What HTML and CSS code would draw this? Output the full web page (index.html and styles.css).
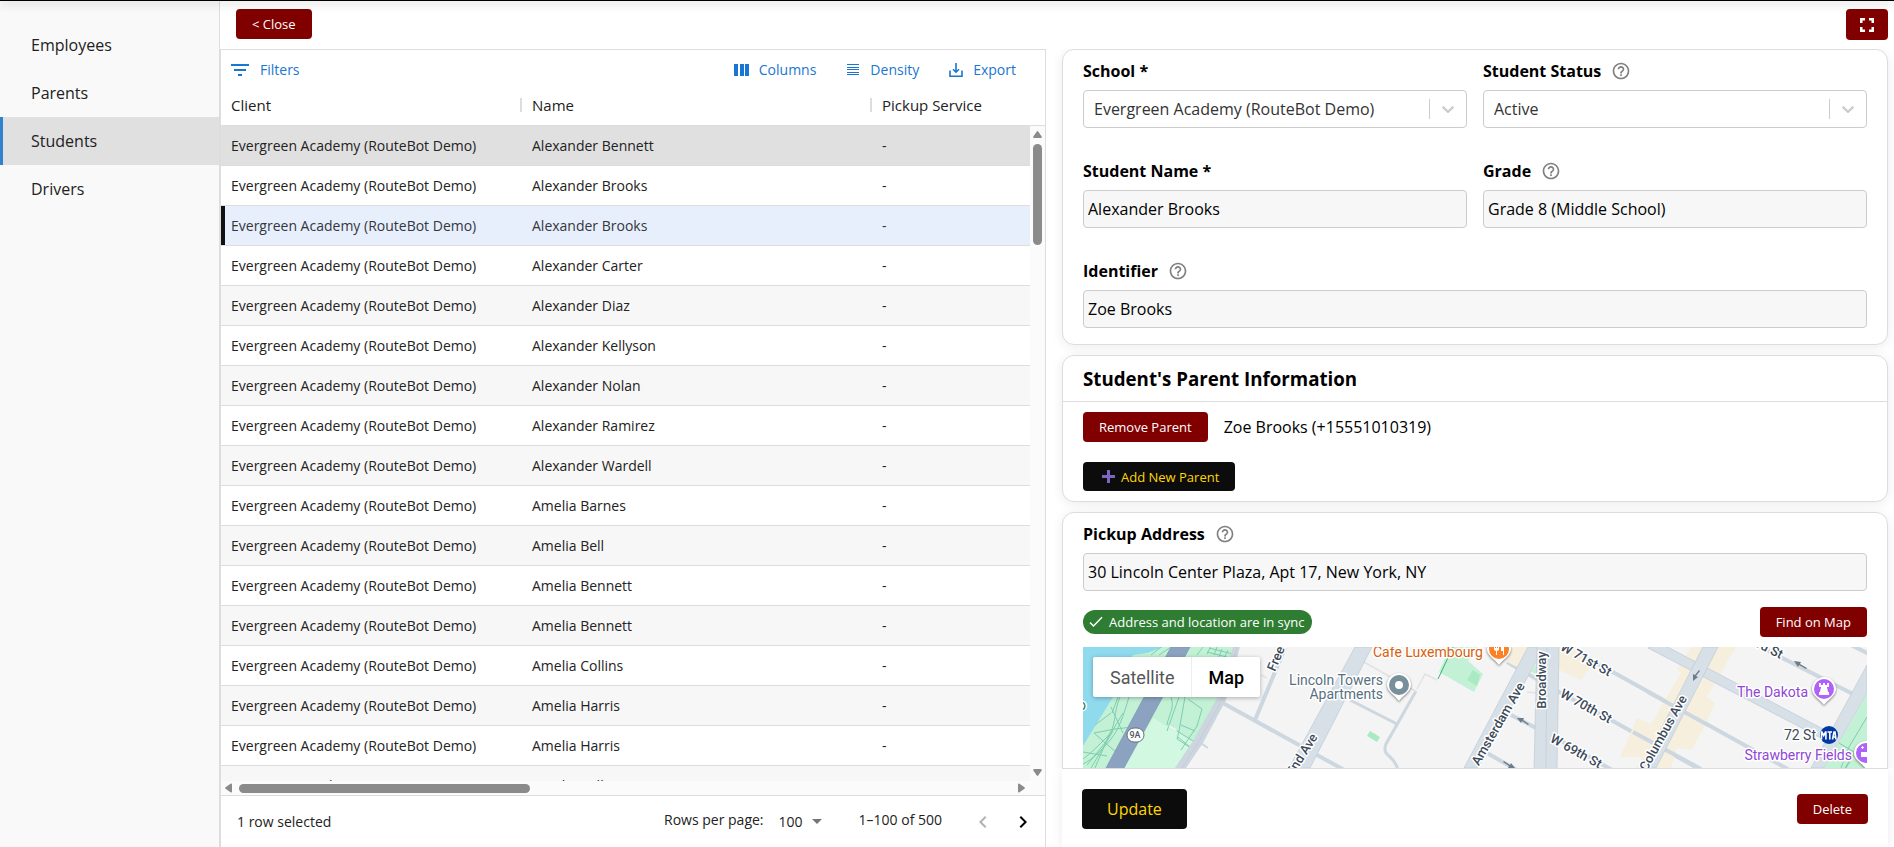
FILE: index.html
```html
<!DOCTYPE html>
<html lang="en">
<head>
<meta charset="utf-8">
<meta name="viewport" content="width=device-width, initial-scale=1">
<title>Students</title>
<link rel="stylesheet" href="styles.css">
</head>
<body>
<svg class="defs" aria-hidden="true">
  <symbol id="help" viewBox="0 0 24 24"><path d="M11 18h2v-2h-2v2zm1-16C6.480 2 2 6.480 2 12s4.480 10 10 10 10-4.480 10-10S17.520 2 12 2zm0 18c-4.410 0-8-3.590-8-8s3.590-8 8-8 8 3.590 8 8-3.590 8-8 8zm0-14c-2.210 0-4 1.790-4 4h2c0-1.100.9-2 2-2s2 .9 2 2c0 2-3 1.750-3 5h2c0-2.250 3-2.500 3-5 0-2.210-1.790-4-4-4z"/></symbol>
  <symbol id="chevron" viewBox="0 0 20 20"><path d="M4.516 7.548c0.436-0.446 1.043-0.481 1.576 0l3.908 3.747 3.908-3.747c0.533-0.481 1.141-0.446 1.574 0 0.436 0.445 0.408 1.197 0 1.615-0.406 0.418-4.695 4.502-4.695 4.502-0.217 0.223-0.502 0.335-0.787 0.335s-0.570-0.112-0.789-0.335c0 0-4.287-4.084-4.695-4.502s-0.436-1.170 0-1.615z"/></symbol>
</svg>
<div class="app">
  <header class="topline"></header>
  <div class="body">
    <nav class="sidebar">
      <a class="nav-link" href="#employees">Employees</a>
      <a class="nav-link" href="#parents">Parents</a>
      <a class="nav-link active" href="#students">Students</a>
      <a class="nav-link" href="#drivers">Drivers</a>
    </nav>
    <main class="main">
      <div class="actions">
        <button class="btn red" type="button">&lt; Close</button>
        <button class="btn red full" type="button" aria-label="Fullscreen"><svg width="24" height="24" viewBox="0 0 24 24" fill="#fff"><path d="M5 10h2.500V7.500H10V5H5zM14 5v2.500h2.500V10H19V5zM7.500 14H5v5h5v-2.500H7.500zM16.500 16.500H14V19h5v-5h-2.500z"/></svg></button>
      </div>
      <div class="panes">
        <section class="grid">
          <div class="toolbar">
            <button class="tool first" type="button"><svg width="18" height="18" viewBox="0 0 18 18"><path d="M0 3h18v2H0zM3 8h12v2H3zM7 13h4v2H7z"/></svg>Filters</button>
            <button class="tool" type="button"><svg width="18" height="18" viewBox="0 0 18 18"><path d="M1 3h4v12H1zM7 3h4v12H7zM12 3h4v12h-4z"/></svg>Columns</button>
            <button class="tool" type="button"><svg width="18" height="18" viewBox="0 0 18 18"><path d="M3 3h12v1H3zM3 6h12v1H3zM3 8h12v1H3zM3 11h12v1H3zM3 13h12v1H3z"/></svg>Density</button>
            <button class="tool" type="button"><svg width="18" height="18" viewBox="0 0 18 18" fill="none" stroke="#1976d2" stroke-width="1.600"><path class="line" d="M3 9.500v5.700h12V9.500M9 2v9M6 8.200l3 3 3-3"/></svg>Export</button>
          </div>
          <div class="viewport">
            <table class="rows">
              <colgroup><col class="c1"><col class="c2"><col></colgroup>
              <thead><tr><th><span>Client</span></th><th><span>Name</span></th><th>Pickup Service</th></tr></thead>
              <tbody>
                <tr class="hover"><td>Evergreen Academy (RouteBot Demo)</td><td>Alexander Bennett</td><td>-</td></tr>
                <tr><td>Evergreen Academy (RouteBot Demo)</td><td>Alexander Brooks</td><td>-</td></tr>
                <tr class="selected"><td>Evergreen Academy (RouteBot Demo)</td><td>Alexander Brooks</td><td>-</td></tr>
                <tr><td>Evergreen Academy (RouteBot Demo)</td><td>Alexander Carter</td><td>-</td></tr>
                <tr><td>Evergreen Academy (RouteBot Demo)</td><td>Alexander Diaz</td><td>-</td></tr>
                <tr><td>Evergreen Academy (RouteBot Demo)</td><td>Alexander Kellyson</td><td>-</td></tr>
                <tr><td>Evergreen Academy (RouteBot Demo)</td><td>Alexander Nolan</td><td>-</td></tr>
                <tr><td>Evergreen Academy (RouteBot Demo)</td><td>Alexander Ramirez</td><td>-</td></tr>
                <tr><td>Evergreen Academy (RouteBot Demo)</td><td>Alexander Wardell</td><td>-</td></tr>
                <tr><td>Evergreen Academy (RouteBot Demo)</td><td>Amelia Barnes</td><td>-</td></tr>
                <tr><td>Evergreen Academy (RouteBot Demo)</td><td>Amelia Bell</td><td>-</td></tr>
                <tr><td>Evergreen Academy (RouteBot Demo)</td><td>Amelia Bennett</td><td>-</td></tr>
                <tr><td>Evergreen Academy (RouteBot Demo)</td><td>Amelia Bennett</td><td>-</td></tr>
                <tr><td>Evergreen Academy (RouteBot Demo)</td><td>Amelia Collins</td><td>-</td></tr>
                <tr><td>Evergreen Academy (RouteBot Demo)</td><td>Amelia Harris</td><td>-</td></tr>
                <tr><td>Evergreen Academy (RouteBot Demo)</td><td>Amelia Harris</td><td>-</td></tr>
                <tr><td>Evergreen Academy (RouteBot Demo)</td><td>Amelia Kelly</td><td>-</td></tr>
              </tbody>
            </table>
            <div class="vbar">
              <svg width="15" height="18" viewBox="0 0 15 18"><path d="M6.800 5.500 3.300 10.500q-.8 1.500 1 1.500h6.400q1.800 0 1-1.500L8.200 5.500q-.7-.8-1.400 0z"/></svg>
              <div class="vthumb"></div>
              <svg class="end" width="15" height="18" viewBox="0 0 15 18"><path d="M6.800 12.500 3.300 7.500q-.8-1.500 1-1.500h6.400q1.800 0 1 1.500L8.200 12.500q-.7.8-1.400 0z"/></svg>
            </div>
          </div>
          <div class="hbar">
            <svg width="18" height="14" viewBox="0 0 18 14"><path d="M4.500 6.300 9.500 2.800q1.500-.8 1.500 1v6.400q0 1.800-1.500 1L4.500 7.700q-.8-.7 0-1.400z"/></svg>
            <div class="hthumb"></div>
            <svg class="end" width="18" height="14" viewBox="0 0 18 14"><path d="M12.500 6.300 7.500 2.800Q6 2 6 3.800v6.400q0 1.800 1.500 1l5-3.500q.8-.7 0-1.400z"/></svg>
          </div>
          <footer class="pager">
            <span class="count">1 row selected</span>
            <label class="raised" for="per-page">Rows per page:</label>
            <span class="per-page"><select id="per-page"><option>100</option></select><svg width="10" height="5" viewBox="0 0 10 5"><path fill="#757575" d="M0 0h10L5 5z"/></svg></span>
            <span class="range raised">1–100 of 500</span>
            <button class="page-btn" type="button" disabled aria-label="Previous page"><svg width="24" height="24" viewBox="0 0 24 24"><path d="M15.410 7.410 14 6l-6 6 6 6 1.410-1.410L10.830 12z"/></svg></button>
            <button class="page-btn" type="button" aria-label="Next page"><svg width="24" height="24" viewBox="0 0 24 24"><path d="M10 6 8.590 7.410 13.170 12l-4.580 4.590L10 18l6-6z"/></svg></button>
          </footer>
        </section>

        <form class="detail">
          <div class="cards">
            <section class="card fields">
              <div class="field">
                <div class="label"><label for="school">School *</label></div>
                <div class="select"><select id="school"><option>Evergreen Academy (RouteBot Demo)</option></select><svg width="20" height="20"><use href="#chevron"/></svg></div>
              </div>
              <div class="field">
                <div class="label"><label for="status">Student Status</label><svg width="20" height="20"><use href="#help"/></svg></div>
                <div class="select"><select id="status"><option>Active</option></select><svg width="20" height="20"><use href="#chevron"/></svg></div>
              </div>
              <div class="field">
                <div class="label"><label for="name">Student Name *</label></div>
                <input class="input" id="name" type="text" value="Alexander Brooks">
              </div>
              <div class="field">
                <div class="label"><label for="grade">Grade</label><svg width="20" height="20"><use href="#help"/></svg></div>
                <input class="input" id="grade" type="text" value="Grade 8 (Middle School)">
              </div>
              <div class="field wide">
                <div class="label"><label for="ident">Identifier</label><svg width="20" height="20"><use href="#help"/></svg></div>
                <input class="input" id="ident" type="text" value="Zoe Brooks">
              </div>
            </section>

            <section class="card">
              <h3 class="title">Student's Parent Information</h3>
              <div class="parents">
                <div class="parent"><button class="btn red" type="button">Remove Parent</button><span>Zoe Brooks (+15551010319)</span></div>
                <button class="btn black add" type="button"><svg width="13" height="13" viewBox="0 0 13 13"><path fill="#7e64c4" d="M5 0h3v5h5v3H8v5H5V8H0V5h5z"/></svg>Add New Parent</button>
              </div>
            </section>

            <section class="card address">
              <div class="label"><label for="address">Pickup Address</label><svg width="20" height="20"><use href="#help"/></svg></div>
              <input class="input" id="address" type="text" value="30 Lincoln Center Plaza, Apt 17, New York, NY">
              <div class="sync">
                <span class="chip"><svg width="14" height="12" viewBox="0 0 14 12" fill="none" stroke="#fff" stroke-width="1.500"><path d="M1 6.500 4.500 10 13 1.200"/></svg>Address and location are in sync</span>
                <button class="btn red" type="button">Find on Map</button>
              </div>
              <div class="map">
                <svg class="map-art" viewBox="0 0 784 240" preserveAspectRatio="xMinYMin slice">
                  <rect width="784" height="240" fill="#f4f4f4"/>
                  <path fill="#c3f1d5" d="M0 0h151l-17 53-25 45-17 23-40 60H0z"/>
                  <path fill="#90daee" d="M0 0h80L64 6 50 8 40 30 30 50 14 76 0 99z"/>
                  <path fill="#d3f8e2" d="m70 71 40 23-18 27-40 60H10l31-60z"/>
                  <g fill="none" stroke="#7fcdb0" stroke-width="1">
                    <path d="M37 50C30 65 34 80 24 90S8 106 0 112M46 50C40 70 36 82 28 92S10 112 0 117M11 86l21-4 18-2M11 86l23 20M35 50 29 66M28 60l12 26M40 66 22 96 4 118M0 105l24 4M12 78l16-12M30 84 8 121M26 88l-14 33"/>
                    <path d="M84 78c2-12 8-16 4-28M96 50 84 84M105 52l14 10-5 17-16 24M94 84l16 10M95 90l12 10M102 50 96 84l-2 8 14 9M98 78l14 6M76 8l12-8M68 8l10-8M114 8l6-8M126 1l24 6M128-1l-4 8M134 0l-3 8M139 2l-3 8M145 3l-4 8M124 5l20 5"/>
                  </g>
                  <path stroke="#f2f4f5" stroke-width="1.500" d="m86 79 7 4"/>
                  <path fill="#cdd6df" d="M150 0h7l-14 53-23 43-17 25-40 60H52l40-60 18-27 24-43z"/>
                  <path fill="none" stroke="#bfcad6" stroke-width=".7" d="m154 0-15 53-24 43-16 25M117 95l8 6"/>
                  <path stroke="#cdd6df" stroke-width="2" d="m116 95 9 6"/>
                  <path fill="#8ba3c0" stroke="#7b95b6" stroke-width=".7" d="M88 0h19L41 121l-15 30H6l17-30z"/>
                  <g fill="none" stroke="#cdd7df" stroke-width="4">
                    <path d="m138 55 136 75M172 73l25-60 9-22"/>
                    <path stroke-width="3" d="m267 53 47 24"/>
                    <path stroke-width="3" d="m333 44-30 53q-3 8 3 12 7 6 9 14"/>
                    <path d="m424 15 52 30 52 28 90 50M476-3l52 27 182 101M428 68l50 26 60 34M404 106l35 20"/>
                    <path d="m670-4 100 51M768-2l18 9"/>
                  </g>
                  <path fill="none" stroke="#e1e2e4" stroke-width="1.500" d="m281 15 53 30M334 42l8-15 12 6M178 28l6 3M444 45l10 1"/>
                  <path fill="#c3f1d5" d="m367 0 28-1-10 15 15 13-9 18-35-20z"/><path fill="#aaeac3" d="m390 23 7 5-3 11-10-6zM287 84l10 6-3 5-10-6z"/>
                  <path stroke="#35b376" d="m355 32 16-34"/>
                  <g fill="#f6efdd">
                    <path d="m424 15 5-15h20l-11 22z"/><path d="M474 0h17l17 20-10 13-22-10z"/>
                    <path d="M608 0h45l-29 50 8 6-11 24-12 23-15-2-6 20h-34l5-11h-22l17-39 14 6 30-51-4-4z"/>
                  </g>
                  <path fill="#c3f1d5" d="m448 25 7-11v14z"/>
                  <path fill="none" stroke="#cdd7df" stroke-width="4" d="m550 85 68 37M565 45l60 33"/>
                  <g fill="#d7dfe7" stroke="#bfcbd7" stroke-width=".7">
                    <path d="M272 0h17l-62 121H206z"/><path d="M445 0h16l-66 121h-14z"/>
                    <path d="M454-1h22l-2 123h-23z"/><path d="m577-4 163 86 4 6-4 4-175-91z"/>
                    <path d="M620 0h15l-62 121h-15z"/><path d="m784 18-56 103h13l43-75z"/>
                  </g>
                  <path fill="none" stroke="#c3ced9" stroke-width=".7" d="m464 0-1 121"/>
                  <path fill="#c3f1d5" d="M784 47v74h-43z"/>
                  <path fill="none" stroke="#7fcdb0" d="M756 96l20 12M784 70l-18 30-8 21M776 98l-14 23M771 108l-8 13"/>
                  <g fill="#6c7c8b"><path d="m711 14 7 1-1 2 7 4-1 1-7-4-1 2zM610 34v-7l2 1 4-5 1 1-4 5 2 1zM434 71l7 0-1 2 6 4-1 1-6-4-1 2zM432 121l-7 0 1-2-6-4 1-1 6 4 1-2z"/></g>
                  <g class="halo street">
                    <text transform="translate(192 25) rotate(-67)">Freedom Pl</text>
                    <text transform="translate(235 90) rotate(-58)" text-anchor="end">West End Ave</text>
                    <text transform="translate(419 79) rotate(-60)" text-anchor="middle">Amsterdam Ave</text>
                    <text transform="translate(463 33) rotate(-90)" text-anchor="middle">Broadway</text>
                    <text transform="translate(501 16) rotate(29)" text-anchor="middle">W 71st St</text>
                    <text transform="translate(501 63) rotate(29)" text-anchor="middle">W 70th St</text>
                    <text transform="translate(491 108) rotate(29)" text-anchor="middle">W 69th St</text>
                    <text transform="translate(584 88) rotate(-61)" text-anchor="middle">Columbus Ave</text>
                    <text transform="translate(697 12) rotate(27)" text-anchor="end">W 73rd St</text>
                  </g>
                  <g class="halo">
                    <text x="290" y="10" fill="#d9600b">Cafe Luxembourg</text>
                    <text x="300" y="38" fill="#58707f" text-anchor="end">Lincoln Towers</text>
                    <text x="300" y="52" fill="#58707f" text-anchor="end">Apartments</text>
                    <text x="725" y="50" fill="#9147d6" text-anchor="end">The Dakota</text>
                    <text x="733" y="93" fill="#3c4a58" text-anchor="end">72 St</text>
                    <text x="769" y="113" fill="#9147d6" text-anchor="end">Strawberry Fields</text>
                    <text x="-5" y="63" fill="#108060">o</text>
                  </g>
                  <rect x="44" y="81" width="17" height="14" rx="7" fill="#fff" stroke="#647181"/>
                  <text class="shield" x="52" y="91" text-anchor="middle">9A</text>
                  <g class="pin" fill="#fff"><path d="M304 38a12 12 0 1 1 24 0c0 7-8 10-12 16-4-6-12-9-12-16z"/><path d="M404 2a12 12 0 1 1 24 0c0 7-8 10-12 16-4-6-12-9-12-16z"/><path d="M729 42a12 12 0 1 1 24 0c0 7-8 10-12 16-4-6-12-9-12-16z"/><path d="M771 106a12 12 0 1 1 24 0c0 7-8 10-12 16-4-6-12-9-12-16z"/></g>
                  <circle cx="316" cy="38" r="7" fill="none" stroke="#78909c" stroke-width="6"/>
                  <circle cx="416" cy="2" r="10" fill="#ff8126"/><path fill="#fff" d="M411-3h1v4h1v-4h1v4h1v-4h1v6l-2 1v4h-1V4l-2-1zM418-3q3 1 3 4v7h-1V4h-2z"/>
                  <circle cx="741" cy="42" r="10" fill="#b061fa"/><path fill="#fff" d="M736 36h2v2h2v-2h2v2h2v-2h2v4h-2l1 5h1v3h-10v-3h1l1-5h-2z"/>
                  <circle cx="783" cy="106" r="10" fill="#b061fa"/><path fill="#fff" d="M778 105h6v5h-6zM779 99h1v1h1v1h-1v1h-1v-1h-1v-1h1z"/>
                  <circle cx="746" cy="88" r="9" fill="#0039a6"/>
                  <path fill="none" stroke="#fff" stroke-width="1.600" d="M738.500 92.500v-8l2.200 4 2.200-4v8M744.500 85h4.500M746.800 85v7.500M749.500 92.500l1.500-7.500h1l1 7.500M750 90h3"/>
                </svg>
                <div class="map-type"><button type="button">Satellite</button><button class="on" type="button">Map</button></div>
              </div>
            </section>
          </div>
          <div class="save">
            <button class="btn black big" type="submit">Update</button>
            <button class="btn red" type="button">Delete</button>
          </div>
        </form>
      </div>
    </main>
  </div>
</div>
</body>
</html>
```
FILE: styles.css
```css
* { box-sizing: border-box; }
body {
  margin: 0;
  font: 16px/24px "Open Sans", "Noto Sans", sans-serif;
  color: #000;
  background: #fff;
}
button, input, select { font: inherit; color: inherit; margin: 0; }
button { border: 0; background: none; cursor: pointer; }
.defs { display: none; }

.app { height: 100vh; display: flex; flex-direction: column; overflow: hidden; }
.topline {
  flex: 0 0 1px;
  background: #000;
  position: relative;
  z-index: 2;
  box-shadow: 0 2px 8px rgba(40, 10, 30, .5);
}
.body { flex: 1; min-height: 0; display: flex; }

.sidebar {
  flex: 0 0 220px;
  padding-top: 20px;
  background: #f9f9f9;
  border-right: 1px solid #ddd;
}
.nav-link {
  display: block;
  padding: 12px 28px;
  border-left: 3px solid transparent;
  color: #222;
  text-decoration: none;
}
.nav-link.active { background: #e0e0e0; border-left-color: #3182ce; }

.main { flex: 1; min-width: 0; display: flex; flex-direction: column; }
.actions {
  flex: 0 0 48px;
  display: flex;
  justify-content: space-between;
  align-items: flex-start;
  padding: 8px 6px 0 16px;
}
.btn {
  height: 30px;
  padding: 0 16px;
  border-radius: 4px;
  font-size: 13px;
  line-height: 20px;
}
.red { background: #800000; color: #fff; }
.black { background: #0c0c0c; color: #ffd700; }
.full { width: 42px; height: 31px; padding: 0; display: grid; place-items: center; }
.big { height: 40px; padding: 0 25px; font-size: 16px; }

.panes { flex: 1; min-height: 0; display: grid; grid-template-columns: 1fr 1fr; gap: 16px; padding-right: 6px; }

.grid {
  min-width: 0;
  min-height: 0;
  display: flex;
  flex-direction: column;
  border: 1px solid #ddd;
  border-bottom: 0;
  font-size: 14px;
  color: #222;
}
.toolbar { display: flex; gap: 28px; padding: 10px 29px 0 10px; height: 36px; }
.tool { display: flex; align-items: center; gap: 8px; padding: 0; height: 20px; line-height: 20px; font-weight: 500; color: #1976d2; }
.tool svg { fill: #1976d2; }
.tool .line { fill: none; }
.tool.first { margin-right: auto; gap: 11px; }

.viewport { position: relative; flex: 1; min-height: 0; overflow: hidden; }
.rows { width: 100%; table-layout: fixed; border-collapse: separate; border-spacing: 0; }
.c1 { width: 301px; }
.c2 { width: 350px; }
.rows th { height: 40px; padding: 0 10px 2px; text-align: left; font-weight: 400; font-size: 15px; line-height: 20px; border-bottom: 1px solid #ddd; }
.rows th span { display: block; margin-right: -10px; background: linear-gradient(#ddd, #ddd) right center / 2px 14px no-repeat; }
.rows td { height: 40px; padding: 0 10px; line-height: 20px; border-bottom: 1px solid #ddd; }
.rows tbody tr:nth-child(odd) { background: #f7f7f7; }
.rows tbody tr.hover { background: #e0e0e0; }
.rows tbody tr.selected { background: #e8effc; color: #33373d; }
.rows tr.selected td:first-child { box-shadow: inset 4px 0 #111; }

/* Scroll bars drawn over the edges of the rows. */
.vbar {
  position: absolute;
  top: 40px;
  right: 0;
  bottom: 0;
  width: 15px;
  display: flex;
  flex-direction: column;
  background: #fbfbfb;
}
.vthumb { width: 9px; height: 101px; margin-left: 3px; border-radius: 5px; background: #8b8b8b; }
.end { margin: auto 0 0 auto; }
.vbar svg, .hbar svg { flex: none; fill: #8b8b8b; }
.hbar { flex: 0 0 15px; display: flex; align-items: center; padding-right: 15px; background: #fbfbfb; border-bottom: 1px solid #ddd; }
.hthumb { width: 291px; height: 9px; border-radius: 5px; background: #8b8b8b; }

.pager { flex: 0 0 51px; display: flex; align-items: center; padding: 0 10px 0 16px; line-height: 20px; }
.count { margin-right: auto; }
.raised { padding-bottom: 4px; }
.per-page { display: flex; align-items: center; gap: 8px; margin: 0 37px 0 15px; }
.per-page select { appearance: none; border: 0; padding: 0; background: none; }
.range { margin-right: 13px; }
.page-btn { display: flex; padding: 0; margin-left: 16px; }
.page-btn:disabled { opacity: .3; }

.detail { min-width: 0; min-height: 0; display: flex; flex-direction: column; }
.cards { flex: 1; min-height: 0; display: flex; flex-direction: column; gap: 10px; clip-path: inset(0 -16px); }
.card {
  flex: none;
  border: 1px solid #ddd;
  border-radius: 12px;
  background: #fff;
  box-shadow: 0 2px 12px rgba(0, 0, 0, .08);
}
.fields { display: grid; grid-template-columns: 1fr 1fr; gap: 31px 16px; padding: 9px 20px 16px; }
.wide { grid-column: 1 / -1; }
.label { display: flex; align-items: center; gap: 10px; height: 24px; margin-bottom: 7px; font-weight: 700; }
.label svg { fill: #808080; }
.input, .select select {
  display: block;
  width: 100%;
  height: 38px;
  padding: 0 4px;
  border: 1px solid #ccc;
  border-radius: 4px;
  background: #f7f7f7;
}
.select { position: relative; }
.select select { appearance: none; padding: 0 10px; background: linear-gradient(#ccc, #ccc) right 36px center / 1px 20px no-repeat #fff; color: #333; }
.select svg { position: absolute; right: 9px; top: 9px; fill: #ccc; pointer-events: none; }

.title { margin: 0; padding: 10px 20px; line-height: 25px; border-bottom: 1px solid #ddd; }
.parents { display: flex; flex-direction: column; align-items: flex-start; gap: 20px; padding: 10px 20px; }
.parent { display: flex; align-items: center; gap: 16px; }
.add { display: flex; align-items: center; gap: 6px; height: 29px; padding-left: 19px; }

.address { padding: 9px 20px 16px; }
.sync { display: flex; justify-content: space-between; align-items: center; padding: 16px 0 10px; }
.chip {
  display: flex;
  align-items: center;
  gap: 6px;
  height: 24px;
  padding: 0 8px 0 6px;
  border-radius: 12px;
  background: #2e7d32;
  color: #fff;
  font-size: 13px;
}
.map { position: relative; height: 240px; overflow: hidden; }
.map-art { display: block; width: 100%; height: 100%; font: 14px Roboto, sans-serif; }
.halo text { paint-order: stroke; stroke: #fff; stroke-width: 3px; stroke-linejoin: round; }
.street { font-size: 13px; font-weight: 500; fill: #3c4a5a; }
.shield { font-size: 9px; fill: #4b5866; font-weight: 500; }
.pin { filter: drop-shadow(0 1px 1px rgba(0, 0, 0, .5)); }
.map-type {
  position: absolute;
  top: 10px;
  left: 10px;
  display: flex;
  border-radius: 2px;
  background: #fff;
  box-shadow: 0 1px 4px rgba(0, 0, 0, .3);
}
.map-type button { height: 40px; padding: 0 17px; font: 18px Roboto, sans-serif; color: #565656; }
.map-type .on { padding: 0 16px; border-left: 1px solid #eee; font-weight: 500; color: #000; }

.save {
  flex: 0 0 79px;
  display: flex;
  justify-content: space-between;
  align-items: center;
  padding: 2px 20px 0;
  border-top: 1px solid #ddd;
  background: #fff;
  box-shadow: 0 2px 12px rgba(0, 0, 0, .08);
  clip-path: inset(0 -16px);
}
```
